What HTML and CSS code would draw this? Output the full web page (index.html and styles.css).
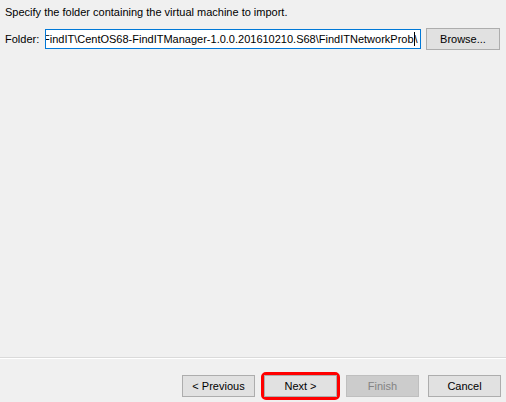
FILE: index.html
```html
<!DOCTYPE html>
<html>
<head>
<meta charset="utf-8">
<link rel="stylesheet" href="styles.css">
</head>
<body>
<div class="page">
  <div class="content">
    <p class="intro">Specify the folder containing the virtual machine to import.</p>
    <div class="folder-row">
      <span class="label">Folder:</span>
      <div class="input"><span class="value">FindIT\CentOS68-FindITManager-1.0.0.201610210.S68\FindITNetworkProb<span class="caret"></span>\</span></div>
      <button class="btn browse">Browse...</button>
    </div>
  </div>
  <div class="footer">
    <button class="btn">&lt; Previous</button>
    <span class="highlight"><button class="btn">Next &gt;</button></span>
    <button class="btn disabled">Finish</button>
    <button class="btn">Cancel</button>
  </div>
</div>
</body>
</html>
```
FILE: styles.css
```css
html, body {
  margin: 0;
  padding: 0;
  background: #f0f0f0;
}
body {
  width: 506px;
  height: 402px;
  overflow: hidden;
  font-family: "Liberation Sans", Arial, sans-serif;
  font-size: 11px;
  color: #000;
}
.page {
  height: 402px;
  display: flex;
  flex-direction: column;
}
.content {
  flex: 1;
  padding: 4px 5px 0 5px;
}
.intro {
  margin: 0;
  line-height: 16px;
}
.folder-row {
  display: flex;
  align-items: center;
  margin-top: 8px;
}
.label {
  width: 40px;
  flex: none;
  line-height: 16px;
}
.input {
  width: 376px;
  flex: none;
  height: 20px;
  border: 1px solid #0078d7;
  background: #fff;
  overflow: hidden;
  white-space: nowrap;
  display: flex;
  align-items: center;
  margin-right: 5px;
  box-sizing: border-box;
}
.value {
  margin-left: -3px;
  line-height: 16px;
}
.caret {
  display: inline-block;
  width: 1px;
  height: 14px;
  background: #000;
  vertical-align: -3px;
}
.btn {
  font-family: inherit;
  font-size: 11px;
  width: 73px;
  height: 22px;
  padding: 0;
  background: #e1e1e1;
  border: 1px solid #adadad;
  color: #000;
  box-sizing: border-box;
  flex: none;
  white-space: nowrap;
}
.browse {
  width: 74px;
}
.btn.disabled {
  background: #cccccc;
  border-color: #bfbfbf;
  color: #838383;
}
.footer {
  height: 45px;
  border-top: 1px solid #dadada;
  box-shadow: inset 0 1px 0 #ffffff;
  display: flex;
  align-items: flex-end;
  justify-content: flex-end;
  padding: 0 5px 5px 0;
  gap: 9px;
  box-sizing: border-box;
}
.highlight {
  display: flex;
  border: 3px solid #ff0000;
  border-radius: 5px;
  margin: 0 -3px -3px;
}
```
